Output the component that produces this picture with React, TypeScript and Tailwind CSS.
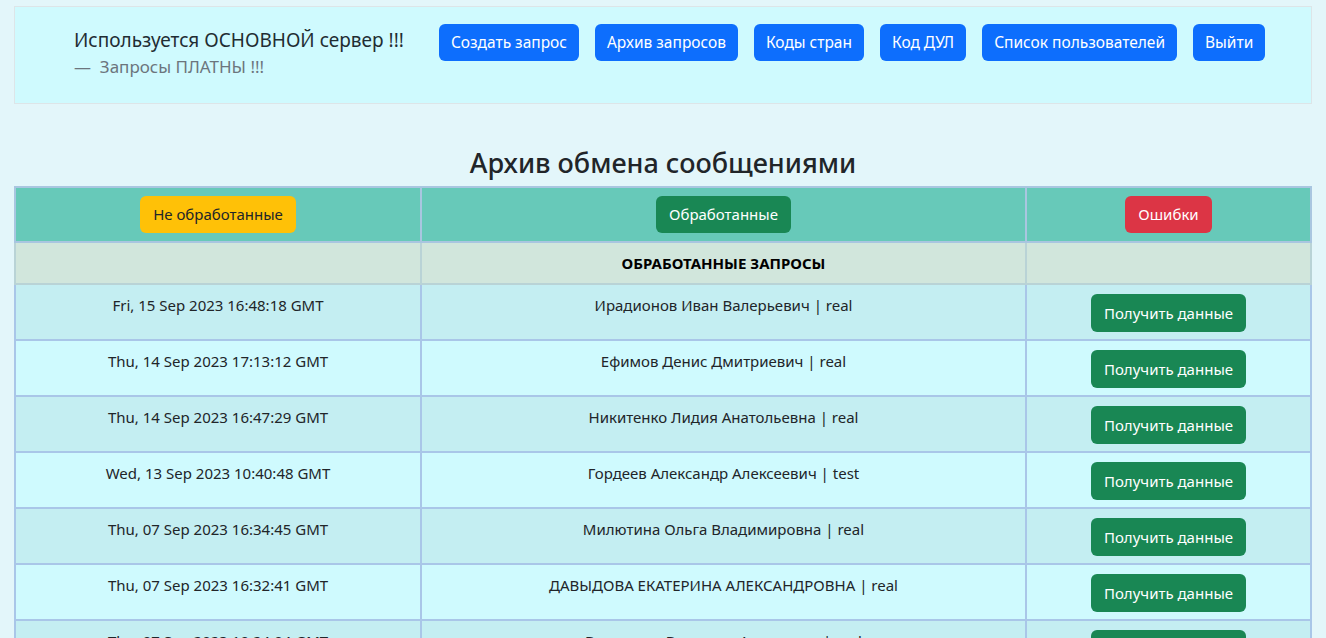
import React from 'react'

const navButtons = ['Создать запрос', 'Архив запросов', 'Коды стран', 'Код ДУЛ', 'Список пользователей', 'Выйти']

const rows = [
  { date: 'Fri, 15 Sep 2023 16:48:18 GMT', name: 'Ирадионов Иван Валерьевич | real' },
  { date: 'Thu, 14 Sep 2023 17:13:12 GMT', name: 'Ефимов Денис Дмитриевич | real' },
  { date: 'Thu, 14 Sep 2023 16:47:29 GMT', name: 'Никитенко Лидия Анатольевна | real' },
  { date: 'Wed, 13 Sep 2023 10:40:48 GMT', name: 'Гордеев Александр Алексеевич | test' },
  { date: 'Thu, 07 Sep 2023 16:34:45 GMT', name: 'Милютина Ольга Владимировна | real' },
  { date: 'Thu, 07 Sep 2023 16:32:41 GMT', name: 'ДАВЫДОВА ЕКАТЕРИНА АЛЕКСАНДРОВНА | real' },
  { date: 'Thu, 07 Sep 2023 10:24:04 GMT', name: 'Васильева Виктория Андреевна | real' },
]

const App: React.FC = () => {
  return (
    <div className="min-h-screen bg-[#e3f6fa] text-[#212529] font-['Noto_Sans',sans-serif] pt-[6px] px-[14px] pb-4">
      <div className="h-[98px] bg-[#cffafe] border border-[#dde5e8] flex items-start pl-[59px] pt-[16px] gap-[35px]">
        <div className="flex flex-col">
          <div className="text-[19px] leading-[34px] text-[#1f2d33]">Используется ОСНОВНОЙ сервер !!!</div>
          <div className="text-[17px] leading-[20px] text-[#6c757d]">—&nbsp; Запросы ПЛАТНЫ !!!</div>
        </div>
        <div className="flex gap-[16px] pt-[1px]">
          {navButtons.map((b) => (
            <button key={b} className="h-[37px] px-[12px] rounded-[6px] bg-[#0d6efd] text-white text-[15.5px]">
              {b}
            </button>
          ))}
        </div>
      </div>

      <h2 className="text-center text-[27px] font-medium leading-[32px] mt-[43px] mb-[7px] text-[#212529]">
        Архив обмена сообщениями
      </h2>

      <table className="w-full border-collapse text-[15px] table-fixed">
        <colgroup>
          <col className="w-[406px]" />
          <col className="w-[605px]" />
          <col />
        </colgroup>
        <thead>
          <tr className="bg-[#67c9b9] h-[55px]">
            <th className="border-2 border-[#a9c6e0] font-normal align-middle">
              <button className="h-[37px] px-[13px] rounded-[6px] bg-[#ffc107] text-[#212529] text-[15px]">Не обработанные</button>
            </th>
            <th className="border-2 border-[#a9c6e0] font-normal align-middle">
              <button className="h-[37px] px-[13px] rounded-[6px] bg-[#198754] text-white text-[15px]">Обработанные</button>
            </th>
            <th className="border-2 border-[#a9c6e0] font-normal align-middle">
              <button className="h-[37px] px-[13px] rounded-[6px] bg-[#dc3545] text-white text-[15px]">Ошибки</button>
            </th>
          </tr>
          <tr className="bg-[#d1e6dc] h-[42px]">
            <th className="border-2 border-[#b9d3d6]"></th>
            <th className="border-2 border-[#b9d3d6] font-bold text-[15px] text-black">ОБРАБОТАННЫЕ ЗАПРОСЫ</th>
            <th className="border-2 border-[#b9d3d6]"></th>
          </tr>
        </thead>
        <tbody>
          {rows.map((r, i) => (
            <tr key={i} className={i % 2 === 0 ? 'bg-[#c4eef2] h-[56px]' : 'bg-[#cffafe] h-[56px]'}>
              <td className="border-2 border-[#a9c6e8] text-center align-top pt-[8px] leading-[24px]">{r.date}</td>
              <td className="border-2 border-[#a9c6e8] text-center align-top pt-[8px] leading-[24px]">{r.name}</td>
              <td className="border-2 border-[#a9c6e8] text-center align-top pt-[9px]">
                <button className="h-[38px] px-[13px] rounded-[6px] bg-[#198754] text-white text-[15px]">Получить данные</button>
              </td>
            </tr>
          ))}
        </tbody>
      </table>
    </div>
  )
}

export default App
